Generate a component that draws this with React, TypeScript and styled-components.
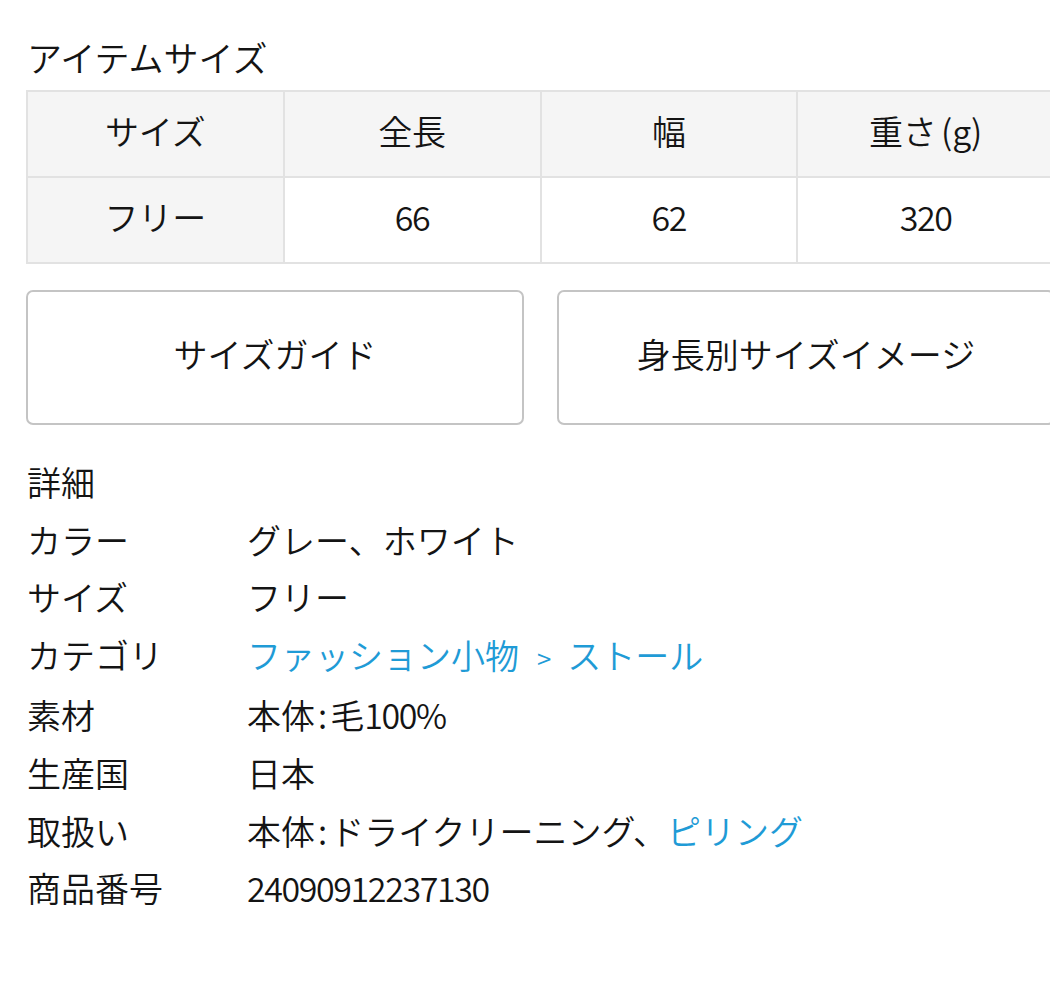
import React from "react";
import styled, { createGlobalStyle } from "styled-components";

const Global = createGlobalStyle`
  html, body {
    margin: 0;
    padding: 0;
    background: #ffffff;
    overflow: hidden;
  }
  body {
    font-family: "Noto Sans CJK JP", "Noto Sans", sans-serif;
    font-weight: 350;
    color: #141414;
  }
`;

const Page = styled.div`
  width: 1029px;
  padding: 31px 0 60px 26px;
  font-size: 34px;
  line-height: 1.5;
`;

const SectionTitle = styled.h2`
  margin: 0 0 8px 1px;
  font-size: 35px;
  font-weight: 350;
  line-height: 51px;
`;

const SizeTable = styled.table`
  width: 1029px;
  border-collapse: collapse;
  table-layout: fixed;
`;

const Cell = styled.td<{ $head?: boolean }>`
  border: 2px solid #e2e2e2;
  background: ${(p) => (p.$head ? "#f5f5f5" : "#ffffff")};
  text-align: center;
  font-weight: 350;
  padding: 13px 0 20px;
  height: 51px;
  line-height: 51px;
`;

const Num = styled.span`
  letter-spacing: -1.4px;
`;

const Paren = styled.span`
  margin-left: 4px;
`;

const Colon = styled.span`
  margin: 0 3px;
`;

const ButtonRow = styled.div`
  display: grid;
  grid-template-columns: 498px 498px;
  gap: 33px;
  margin-top: 26px;
`;

const GuideButton = styled.button`
  height: 135px;
  border: 2px solid #c4c4c4;
  border-radius: 7px;
  background: #ffffff;
  font-family: inherit;
  font-weight: 350;
  font-size: 34px;
  color: #141414;
  display: flex;
  align-items: center;
  justify-content: center;
  padding: 0 0 8px;
`;

const Details = styled.dl`
  margin: 28px 0 0 1px;
  display: grid;
  grid-template-columns: 220px 1fr;
  line-height: 57.6px;
`;

const DetailsTitle = styled.div`
  grid-column: 1 / -1;
`;

const Label = styled.dt`
  margin: 0;
`;

const Value = styled.dd`
  margin: 0;
`;

const Link = styled.a`
  color: #1f9bd6;
  text-decoration: none;
`;

const Sep = styled.span`
  color: #1f9bd6;
  font-size: 26px;
  margin: 0 16px 0 18px;
`;

const headers: React.ReactNode[] = [
  "サイズ",
  "全長",
  "幅",
  <>
    重さ<Paren>(g)</Paren>
  </>,
];
const values: React.ReactNode[] = ["フリー", <Num>66</Num>, <Num>62</Num>, <Num>320</Num>];

const details: { label: string; value: React.ReactNode }[] = [
  { label: "カラー", value: "グレー、ホワイト" },
  { label: "サイズ", value: "フリー" },
  {
    label: "カテゴリ",
    value: (
      <>
        <Link href="#">ファッション小物</Link>
        <Sep>&gt;</Sep>
        <Link href="#">ストール</Link>
      </>
    ),
  },
  {
    label: "素材",
    value: (
      <>
        本体<Colon>:</Colon>毛<Num>100%</Num>
      </>
    ),
  },
  { label: "生産国", value: "日本" },
  {
    label: "取扱い",
    value: (
      <>
        本体<Colon>:</Colon>ドライクリーニング、<Link href="#">ピリング</Link>
      </>
    ),
  },
  { label: "商品番号", value: <Num>24090912237130</Num> },
];

export default function App() {
  return (
    <>
      <Global />
      <Page>
        <SectionTitle>アイテムサイズ</SectionTitle>
        <SizeTable>
          <tbody>
            <tr>
              {headers.map((h, i) => (
                <Cell as="th" key={i} $head>
                  {h}
                </Cell>
              ))}
            </tr>
            <tr>
              {values.map((v, i) => (
                <Cell key={i} $head={i === 0}>
                  {v}
                </Cell>
              ))}
            </tr>
          </tbody>
        </SizeTable>
        <ButtonRow>
          <GuideButton>サイズガイド</GuideButton>
          <GuideButton>身長別サイズイメージ</GuideButton>
        </ButtonRow>
        <Details>
          <DetailsTitle>詳細</DetailsTitle>
          {details.map((d) => (
            <React.Fragment key={d.label}>
              <Label>{d.label}</Label>
              <Value>{d.value}</Value>
            </React.Fragment>
          ))}
        </Details>
      </Page>
    </>
  );
}
